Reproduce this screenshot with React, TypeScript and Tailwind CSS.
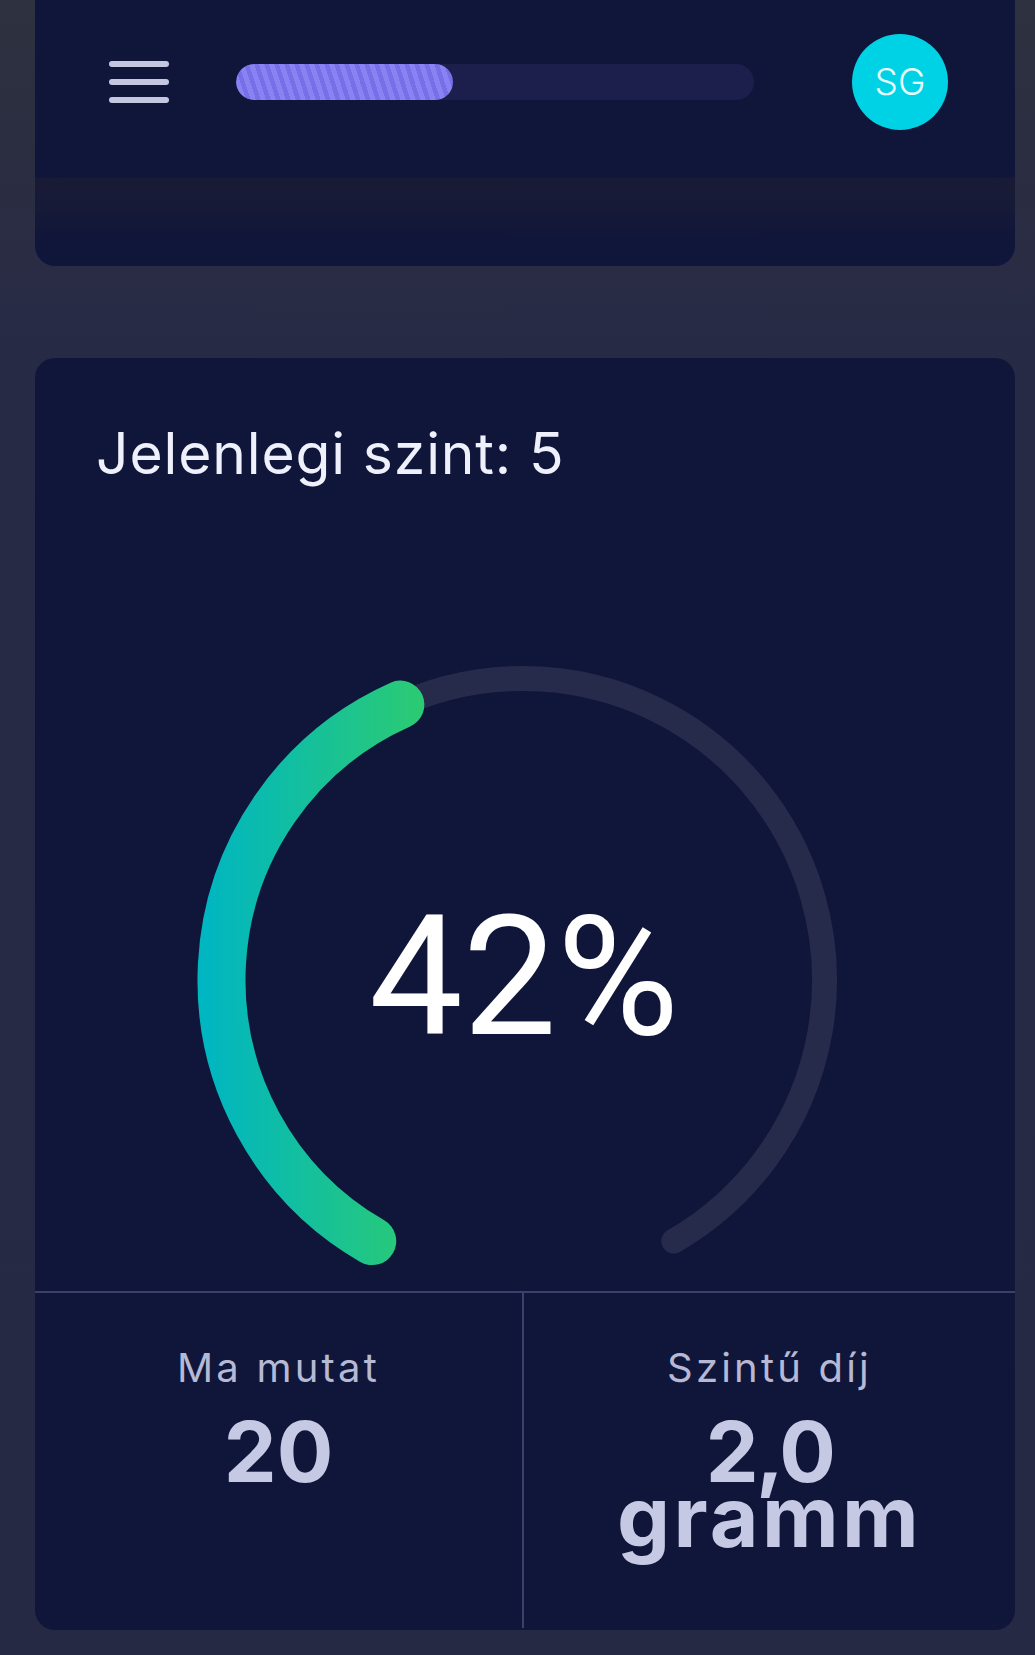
import React from 'react';

const CX = 328;
const CY = 340;
const R = 301.5;
const START = 210;
const END = 150 + 360;

function polar(deg: number) {
  const a = (deg * Math.PI) / 180;
  return { x: CX + R * Math.sin(a), y: CY - R * Math.cos(a) };
}

function arcPath(from: number, to: number) {
  const p1 = polar(from);
  const p2 = polar(to);
  const large = to - from > 180 ? 1 : 0;
  return `M ${p1.x} ${p1.y} A ${R} ${R} 0 ${large} 1 ${p2.x} ${p2.y}`;
}

function Gauge({ percent }: { percent: number }) {
  const progressEnd = START + ((END - START) * percent) / 100;
  return (
    <svg width="660" height="651" viewBox="0 0 660 651" className="block">
      <defs>
        <linearGradient id="gaugeFill" gradientUnits="userSpaceOnUse" x1="10" y1="0" x2="240" y2="0">
          <stop offset="0" stopColor="#00b6c1" />
          <stop offset="1" stopColor="#2ecc6e" />
        </linearGradient>
      </defs>
      <path d={arcPath(START, END)} fill="none" stroke="#262a4b" strokeWidth="25" strokeLinecap="round" />
      <path d={arcPath(START, progressEnd)} fill="none" stroke="url(#gaugeFill)" strokeWidth="48" strokeLinecap="round" />
      <text
        x={CX + 1}
        y={394}
        textAnchor="middle"
        fill="#ffffff"
        fontSize="167"
        fontFamily="Roboto, sans-serif"
      >
        {percent}%
      </text>
    </svg>
  );
}

function Stat({ label, children }: { label: string; children: React.ReactNode }) {
  return (
    <div className="flex flex-col items-center pt-[55px] text-center">
      <p className="text-[40px] leading-none tracking-[0.08em] text-[#b6b9d4]">{label}</p>
      <div className="mt-[31px] text-[84px] font-bold leading-[65px] text-[#c6c9e3]">{children}</div>
    </div>
  );
}

export default function App() {
  return (
    <div className="h-[1655px] overflow-hidden bg-[linear-gradient(180deg,#2e313f_0%,#272a45_22%,#262944_100%)] pl-[35px] pr-[20px] font-['Inter',sans-serif]">
      <div className="h-[266px] rounded-b-[20px] bg-[linear-gradient(180deg,#10163a_0px,#10163a_177px,#191a36_178px,#171a37_205px,#10163a_240px)]">
        <header className="ml-[5px] flex h-[177px] items-center rounded-b-[20px] bg-[#10163a] pb-[13px] pl-[69px] pr-[67px]">
          <div className="flex flex-col gap-[12px]">
            <span className="h-[6px] w-[60px] rounded-full bg-[#c4c7df]" />
            <span className="h-[6px] w-[60px] rounded-full bg-[#c4c7df]" />
            <span className="h-[6px] w-[60px] rounded-full bg-[#c4c7df]" />
          </div>
          <div className="ml-[67px] h-[36px] w-[518px] overflow-hidden rounded-full bg-[#1c1f4b]">
            <div className="h-full w-[217px] rounded-full bg-[repeating-linear-gradient(72deg,#776ee8_0px,#776ee8_4.5px,#8883f3_4.5px,#8883f3_9.5px)]" />
          </div>
          <div className="ml-auto flex h-[96px] w-[96px] items-center justify-center rounded-full bg-[#00d2e5] text-[37px] font-light text-[#e8fbff]">
            SG
          </div>
        </header>
      </div>

      <main className="mt-[92px] h-[1272px] overflow-hidden rounded-[20px] bg-[#10163a]">
        <h1 className="pl-[61px] pt-[67px] text-[57px] leading-none tracking-[0.015em] text-[#eef0fb]">
          Jelenlegi szint: 5
        </h1>
        <div className="mt-[158px] flex justify-center">
          <Gauge percent={42} />
        </div>
        <div className="flex h-[337px] border-t-2 border-[#3b4169]">
          <div className="w-[489px] border-r-2 border-[#3b4169]">
            <Stat label="Ma mutat">20</Stat>
          </div>
          <div className="flex-1">
            <Stat label="Szintű díj">
              <span className="block tracking-[-0.03em]">2,0</span>
              <span className="block tracking-[0.04em]">gramm</span>
            </Stat>
          </div>
        </div>
      </main>
    </div>
  );
}
